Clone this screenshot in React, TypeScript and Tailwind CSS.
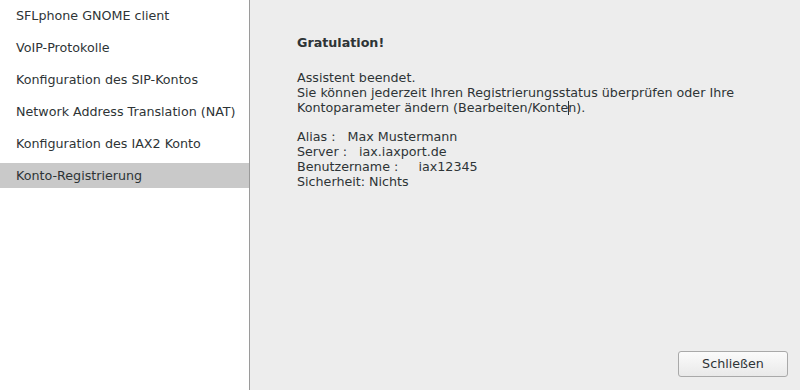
const steps = [
  "SFLphone GNOME client",
  "VoIP-Protokolle",
  "Konfiguration des SIP-Kontos",
  "Network Address Translation (NAT)",
  "Konfiguration des IAX2 Konto",
  "Konto-Registrierung",
];

export default function App() {
  const active = steps.length - 1;

  return (
    <div
      className="flex h-[390px] w-[800px] overflow-hidden bg-[#ededed] text-[12.7px] text-[#2e3436]"
      style={{ fontFamily: '"DejaVu Sans", sans-serif' }}
    >
      {/* Sidebar — assistant steps */}
      <div className="flex w-[250px] shrink-0 flex-col gap-[7px] border-r border-[#9a9a9a] bg-white pt-[3px]">
        {steps.map((s, i) => (
          <div
            key={s}
            className={`flex h-[25px] items-center pl-[16px] ${i === active ? "bg-[#c9c9c9]" : ""}`}
          >
            {s}
          </div>
        ))}
      </div>

      {/* Content */}
      <div className="flex flex-1 flex-col pl-[47px] pr-[12px]">
        <div className="mt-[35px] font-bold leading-[15px]">Gratulation!</div>

        <div className="mt-[20px] leading-[15px]">
          <div>Assistent beendet.</div>
          <div>Sie können jederzeit Ihren Registrierungsstatus überprüfen oder Ihre</div>
          <div>
            Kontoparameter ändern (Bearbeiten/Konte
            <span className="relative inline-block w-0">
              <span className="absolute left-0 top-[-11px] h-[14px] w-px bg-[#2e3436]" />
            </span>
            n).
          </div>
        </div>

        <div className="mt-[14px] whitespace-pre leading-[15px]">
          <div>Alias :   Max Mustermann</div>
          <div>Server :   iax.iaxport.de</div>
          <div>Benutzername :     iax12345</div>
          <div>Sicherheit: Nichts</div>
        </div>

        <div className="mt-auto mb-[13px] flex justify-end">
          <button className="h-[26px] w-[110px] rounded-[3px] border border-[#a9a9a9] bg-gradient-to-b from-[#fbfbfb] to-[#e9e9e9] text-[12.7px] text-[#2e3436]">
            Schließen
          </button>
        </div>
      </div>
    </div>
  );
}
